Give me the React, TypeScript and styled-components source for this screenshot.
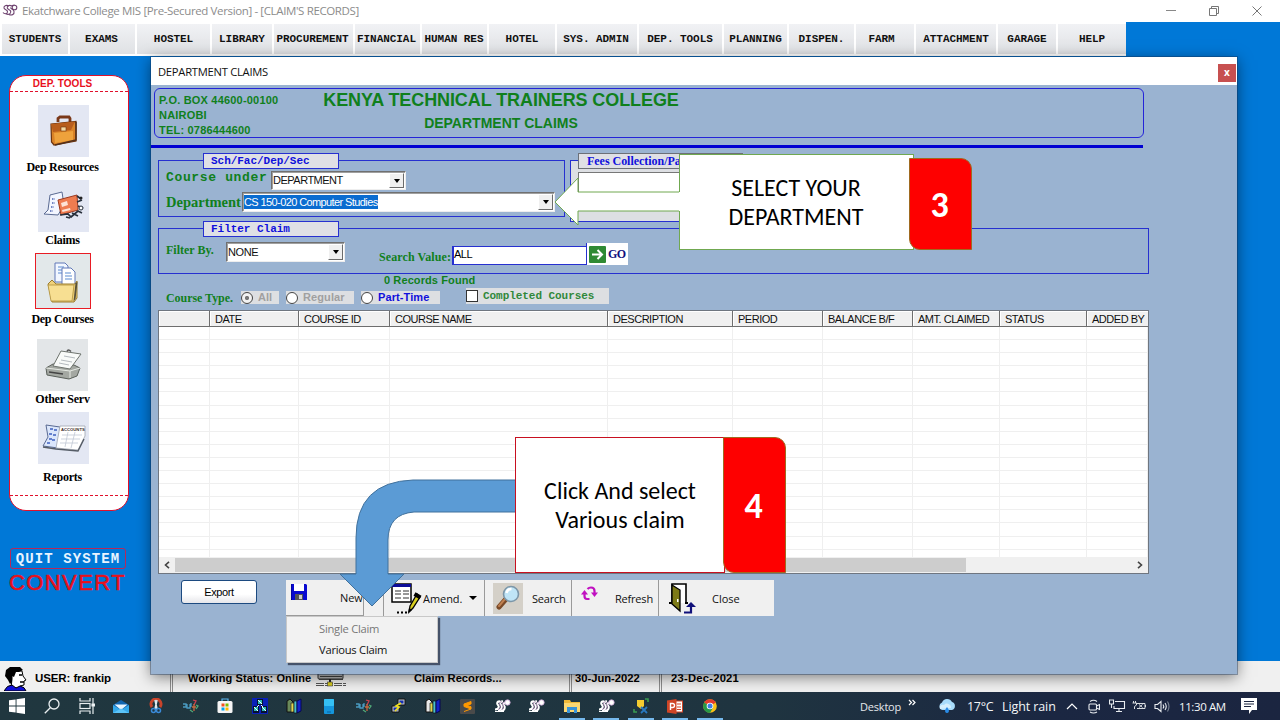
import React from "react";
import styled, { createGlobalStyle } from "styled-components";

const SANS = `"Liberation Sans", Arial, sans-serif`;
const SERIF = `"Liberation Serif", "Times New Roman", serif`;
const MONO = `"Liberation Mono", "Courier New", monospace`;
const UI = `"Open Sans", "Noto Sans", sans-serif`;
const CALLOUT = `Carlito, Lato, sans-serif`;

const Global = createGlobalStyle`
  * { box-sizing: border-box; }
  html, body { margin: 0; padding: 0; overflow: hidden; }
  svg { display: block; flex: none; }
`;

const Screen = styled.div`
  position: relative;
  width: 1280px;
  height: 720px;
  overflow: hidden;
  display: flex;
  flex-direction: column;
  background: #0078d7;
`;

const Text = styled.span<{ $font?: string; $size?: number; $color?: string; $bold?: boolean; $ls?: number; $w?: number }>`
  font-family: ${(p) => p.$font ?? SANS};
  font-size: ${(p) => p.$size ?? 11}px;
  font-weight: ${(p) => (p.$bold ? 700 : 400)};
  color: ${(p) => p.$color ?? "#111"};
  letter-spacing: ${(p) => p.$ls ?? 0}px;
  line-height: 15px;
  white-space: nowrap;
  flex: none;
  ${(p) => (p.$w ? `width: ${p.$w}px;` : "")}
`;

/* ---------- main window chrome ---------- */

const TitleBar = styled.header`
  height: 22px;
  flex: none;
  background: #fff;
  display: flex;
  align-items: center;
  padding: 0 17px 1px 2px;
  gap: 4px;
`;

const WindowControls = styled.div`
  margin-left: auto;
  display: flex;
  align-items: center;
  gap: 31px;
`;

const MenuBar = styled.nav`
  height: 34px;
  width: 1126px;
  flex: none;
  display: flex;
  background: #fff;
  padding: 2px 0 2px 2px;
  gap: 2px;
`;

const MenuItem = styled.div<{ $w: number; $shift?: number }>`
  width: ${(p) => p.$w}px;
  flex: none;
  display: flex;
  align-items: center;
  justify-content: center;
  padding-right: ${(p) => p.$shift ?? 0}px;
  background: linear-gradient(#f1f2f5, #dfe1e4);
  font: 700 11px/14px ${MONO};
  color: #111;
  letter-spacing: -0.05px;
  white-space: nowrap;
`;

const Desktop = styled.main`
  flex: 1;
  min-height: 0;
  display: flex;
  flex-direction: column;
  padding: 19px 0 0 9px;
`;

/* ---------- sidebar ---------- */

const Side = styled.aside`
  width: 120px;
  height: 436px;
  flex: none;
  border: 1px solid #e0102c;
  border-radius: 17px;
  background: #fff;
  display: flex;
  flex-direction: column;
  align-items: stretch;
`;

const SideTitle = styled.div`
  height: 16px;
  padding: 0 13px 0 0;
  text-align: center;
  font: 700 10px/15px ${SANS};
  letter-spacing: 0.05px;
  color: #e8101c;
  border-bottom: 1px dashed #e0102c;
`;

const SideFoot = styled.div`
  margin-top: auto;
  height: 15px;
  border-top: 1px dashed #e0102c;
`;

const SideItem = styled.div<{ $top: number; $gap: number; $shift?: number }>`
  margin-top: ${(p) => p.$top}px;
  display: flex;
  flex-direction: column;
  align-items: center;
  gap: ${(p) => p.$gap}px;
  padding-right: 13px;
  & > :first-child { margin-left: ${(p) => p.$shift ?? 2}px; }
`;

const Tile = styled.div<{ $bg?: string; $active?: boolean }>`
  width: ${(p) => (p.$active ? 56 : 51)}px;
  height: ${(p) => (p.$active ? 56 : 52)}px;
  background: ${(p) => p.$bg ?? "#e3e7f3"};
  border: ${(p) => (p.$active ? "1px solid #e81c24" : "none")};
  display: flex;
  align-items: center;
  justify-content: center;
`;

const SideLabel = styled.div`
  height: 14px;
  font: 700 12px/14px ${SERIF};
  letter-spacing: -0.25px;
  color: #000;
  white-space: nowrap;
`;

const Quit = styled.div`
  margin: 37px 0 0 1px;
  width: 116px;
  height: 21px;
  border: 1px solid #b8285a;
  border-radius: 3px;
  display: flex;
  align-items: center;
  justify-content: center;
  font: 700 14px/18px ${MONO};
  letter-spacing: 1.1px;
  color: #e8f4ff;
  white-space: nowrap;
`;

const Convert = styled.div`
  height: 27px;
  font: 400 22px/27px ${SANS};
  letter-spacing: 1.4px;
  color: #e8101c;
  -webkit-text-stroke: 0.6px #e8101c;
`;

/* ---------- department claims window ---------- */

const ClaimsWindow = styled.section`
  position: absolute;
  left: 151px;
  top: 57px;
  width: 1086px;
  height: 617px;
  z-index: 2;
  display: flex;
  flex-direction: column;
  background: #9ab3d1;
  box-shadow: 0 0 0 1px rgba(20, 50, 90, 0.4), 0 3px 14px rgba(0, 0, 0, 0.5);
`;

const ClaimsTitle = styled.div`
  height: 28px;
  flex: none;
  background: #fff;
  display: flex;
  align-items: center;
  justify-content: space-between;
  padding: 0 1px 0 7px;
`;

const CloseBox = styled.div`
  width: 18px;
  height: 18px;
  margin-top: 3px;
  background: #c75050;
  color: #fff;
  font: 700 10px/17px ${UI};
  text-align: center;
`;

const Banner = styled.div`
  margin: 3px 0 0 3px;
  width: 990px;
  height: 50px;
  flex: none;
  border: 1px solid #2424d8;
  border-radius: 6px;
  display: grid;
  grid-template-columns: 149px 394px;
`;

const Address = styled.div`
  padding: 4px 0 0 4px;
  font: 700 11px/15px ${SANS};
  letter-spacing: 0.2px;
  color: #10801c;
  white-space: nowrap;
`;

const BannerTitles = styled.div`
  display: flex;
  flex-direction: column;
  align-items: center;
  color: #10801c;
  font-family: ${SANS};
  font-weight: 700;
  white-space: nowrap;
`;

const College = styled.div`
  font-size: 18px;
  line-height: 23px;
  letter-spacing: -0.09px;
`;

const Subtitle = styled.div`
  font-size: 14px;
  line-height: 23px;
`;

const Rule = styled.div`
  margin-top: 7px;
  width: 992px;
  height: 3px;
  flex: none;
  background: #0000d2;
`;

const GroupRow = styled.div`
  display: flex;
  align-items: flex-start;
  gap: 5px;
  margin: 12px 0 0 7px;
  height: 68px;
  flex: none;
`;

const Group = styled.div<{ $w: number; $h: number; $bg?: string }>`
  width: ${(p) => p.$w}px;
  height: ${(p) => p.$h}px;
  flex: none;
  border: 1px solid #2630d0;
  background: ${(p) => p.$bg ?? "transparent"};
`;

const Legend = styled.div<{ $w: number; $left: number; $gray?: boolean }>`
  width: ${(p) => p.$w}px;
  height: 16px;
  margin: -8px 0 0 ${(p) => p.$left}px;
  padding-left: ${(p) => (p.$gray ? 8 : 7)}px;
  border: 1px solid ${(p) => (p.$gray ? "#6c7078" : "#2630d0")};
  background: #dfe0e5;
  color: #1010dc;
  font: ${(p) => (p.$gray ? `700 12px/14px ${SERIF}` : `700 11px/14px ${MONO}`)};
  letter-spacing: -0.03px;
  white-space: nowrap;
  overflow: hidden;
`;

const Field = styled.div<{ $top: number }>`
  display: flex;
  align-items: center;
  padding-left: 7px;
  margin-top: ${(p) => p.$top}px;
`;

const RaisedLabel = styled.div`
  padding-bottom: 6px;
  height: 19px;
  line-height: 13px;
  display: flex;
  align-items: center;
`;

const ComboBox = styled.div<{ $w: number; $h?: number }>`
  width: ${(p) => p.$w}px;
  height: ${(p) => p.$h ?? 19}px;
  flex: none;
  display: flex;
  align-items: center;
  justify-content: space-between;
  background: #fff;
  border: 1px solid;
  border-color: #707070 #eee #eee #707070;
  box-shadow: inset 1px 1px 0 #a0a0a0;
  padding: 1px 1px 1px 1px;
`;

const DropButton = styled.div`
  width: 15px;
  height: 100%;
  background: #f0f0f0;
  border: 1px solid;
  border-color: #fff #6c6c6c #6c6c6c #fff;
  display: flex;
  align-items: center;
  justify-content: center;
`;

const Caret = styled.i<{ $size?: number }>`
  width: 0;
  height: 0;
  border: ${(p) => p.$size ?? 3.5}px solid transparent;
  border-top: ${(p) => p.$size ?? 4}px solid #000;
  border-bottom: 0;
`;

const Selected = styled.span`
  background: #0a6cd0;
  color: #fff;
  font: 11px/14px ${SANS};
  letter-spacing: -0.6px;
  white-space: nowrap;
`;

const PlainBox = styled.div`
  margin: 3px 0 0 7px;
  width: 160px;
  height: 21px;
  background: #fff;
  border: 1px solid #777;
`;

const FilterRow = styled.div`
  display: flex;
  align-items: flex-start;
  padding-left: 7px;
`;

const Down = styled.div<{ $y: number; $x?: number }>`
  margin: ${(p) => p.$y}px 0 0 ${(p) => p.$x ?? 0}px;
  display: flex;
  flex: none;
`;

const SearchBox = styled.div`
  width: 134px;
  height: 19px;
  background: #fff;
  border: 1px solid #2630d0;
  border-width: 1px 0 1px 2px;
  font: 11px/14px ${SANS};
  letter-spacing: -0.5px;
`;

const GoButton = styled.div`
  width: 42px;
  height: 22px;
  border-left: 1px solid #2630d0;
  background: #fff;
  display: flex;
  align-items: center;
  gap: 2px;
  padding-left: 2px;
  font: 700 12px/15px ${SERIF};
  letter-spacing: -0.5px;
  color: #101080;
`;

const Found = styled.div`
  height: 12px;
  margin: 0 0 2px 233px;
  font: 700 11px/12px ${SANS};
  letter-spacing: 0.1px;
  color: #10801c;
`;

const TypeRow = styled.div`
  height: 16px;
  flex: none;
  display: flex;
  align-items: center;
  padding: 0 0 0 15px;
`;

const Option = styled.div<{ $w: number; $gap: number; $h?: number; $y?: number }>`
  width: ${(p) => p.$w}px;
  height: ${(p) => p.$h ?? 13}px;
  margin: ${(p) => p.$y ?? 2}px ${(p) => p.$gap}px 0 0;
  flex: none;
  background: #dddfe2;
  display: flex;
  align-items: center;
`;

const Radio = styled.i<{ $on?: boolean }>`
  width: 12px;
  height: 12px;
  flex: none;
  border: 1.5px solid #444;
  border-radius: 50%;
  background: ${(p) => (p.$on ? "radial-gradient(circle, #777 0 1.8px, #f2f2f2 2.4px)" : "#fff")};
  margin-right: 5px;
`;

const Check = styled.i`
  width: 12px;
  height: 12px;
  flex: none;
  border: 1px solid #333;
  background: #fff;
  margin-right: 5px;
`;

/* ---------- claims grid ---------- */

const Grid = styled.div`
  margin: 6px 0 0 7px;
  width: 991px;
  height: 264px;
  flex: none;
  border: 1px solid #6f7680;
  background: #fff;
  display: flex;
  flex-direction: column;
`;

const HeadRow = styled.div`
  display: flex;
  height: 16px;
  flex: none;
  background: #f0f0f0;
  border-bottom: 1px solid #6e6e6e;
`;

const HeadCell = styled.div<{ $w: number }>`
  width: ${(p) => p.$w}px;
  flex: none;
  padding-left: 5px;
  border-right: 1px solid #6e6e6e;
  box-shadow: inset 1px 1px 0 #fff;
  font: 11px/16px ${SANS};
  letter-spacing: -0.48px;
  color: #111;
  white-space: nowrap;
  overflow: hidden;
  &:last-child { border-right: 0; }
`;

const GridBody = styled.div`
  flex: 1;
  min-height: 0;
  overflow: hidden;
`;

const GridRow = styled.div`
  height: 13.1px;
  display: flex;
  border-bottom: 1px solid #efefef;
`;

const GridCell = styled.div<{ $w: number }>`
  width: ${(p) => p.$w}px;
  flex: none;
  border-right: 1px solid #efefef;
`;

const ScrollBar = styled.div`
  height: 16px;
  flex: none;
  background: #f0f0f0;
  display: flex;
  align-items: center;
  justify-content: space-between;
`;

const ScrollThumb = styled.div`
  width: 791px;
  height: 14px;
  margin-right: auto;
  background: #cdcdcd;
`;

const ScrollEnd = styled.div`
  width: 16px;
  display: flex;
  justify-content: center;
`;

/* ---------- bottom toolbar ---------- */

const Footer = styled.div`
  display: flex;
  align-items: flex-start;
  margin: 6px 0 0 30px;
`;

const ExportButton = styled.div`
  width: 76px;
  height: 24px;
  margin-right: 29px;
  border: 1px solid #1c4a80;
  border-radius: 3px;
  background: linear-gradient(#fff 60%, #e6e6ea);
  text-align: center;
  font: 11px/23px ${SANS};
  letter-spacing: -0.4px;
`;

const Toolbar = styled.div`
  position: relative;
  width: 488px;
  height: 36px;
  background: #f0f0f0;
  display: flex;
`;

const Tool = styled.div<{ $w: number; $pad: number; $gap: number; $raised?: boolean }>`
  width: ${(p) => p.$w}px;
  flex: none;
  display: flex;
  align-items: center;
  gap: ${(p) => p.$gap}px;
  padding-left: ${(p) => p.$pad}px;
  border-right: 1px solid ${(p) => (p.$w > 100 && p.$pad === 10 ? "transparent" : "#9a9a9a")};
  border-bottom: ${(p) => (p.$raised ? "1px solid #9a9a9a" : "none")};
`;

const SearchTile = styled.div`
  width: 30px;
  height: 31px;
  background: #d4d0c8;
  display: flex;
  align-items: center;
  justify-content: center;
`;

const DropMenu = styled.div`
  position: absolute;
  left: 0;
  top: 36px;
  width: 152px;
  height: 47px;
  background: #f2f2f2;
  border: 1px solid #c8c8c8;
  box-shadow: 2px 2px 1px rgba(40, 50, 70, 0.75);
  padding: 1px 0 0 32px;
  display: flex;
  flex-direction: column;
`;

const MenuEntry = styled.div<{ $off?: boolean }>`
  font: 11.2px/21px ${UI};
  letter-spacing: -0.25px;
  color: ${(p) => (p.$off ? "#777" : "#111")};
`;

/* ---------- status bar and taskbar ---------- */

const StatusBar = styled.footer`
  height: 31px;
  flex: none;
  background: #f0f0f0;
  display: flex;
`;

const StatusCell = styled.div<{ $w: number; $pad: number; $gap?: number; $line?: boolean }>`
  width: ${(p) => p.$w}px;
  flex: none;
  display: flex;
  align-items: center;
  gap: ${(p) => p.$gap ?? 0}px;
  padding: 4px 0 0 ${(p) => p.$pad}px;
  border-right: ${(p) => (p.$line ? "3px double #8c8c8c" : "0")};
`;

const TaskBar = styled.div`
  position: relative;
  z-index: 3;
  height: 28px;
  flex: none;
  display: flex;
  background: linear-gradient(90deg, #20373f, #1f3440 60%, #1b2742 82%, #1b2540);
`;

const TaskButton = styled.div<{ $open?: boolean }>`
  width: 34.65px;
  flex: none;
  display: flex;
  align-items: center;
  justify-content: center;
  background: ${(p) => (p.$open ? "linear-gradient(#76b9ed, #76b9ed) center bottom / 26px 2px no-repeat" : "none")};
`;

const Tray = styled.div`
  margin-left: auto;
  width: 420px;
  display: flex;
  align-items: center;
`;

const TrayIcon = styled.div<{ $w: number }>`
  width: ${(p) => p.$w}px;
  flex: none;
`;

/* ---------- callouts ---------- */

const Callout = styled.div<{ $x: number; $y: number }>`
  position: absolute;
  left: ${(p) => p.$x}px;
  top: ${(p) => p.$y}px;
  z-index: 4;
  display: flex;
  align-items: flex-end;
`;

const CalloutBody = styled.div<{ $w: number; $h: number; $line: string; $shift?: number }>`
  width: ${(p) => p.$w}px;
  height: ${(p) => p.$h}px;
  background: #fff;
  border: 1px solid ${(p) => p.$line};
  display: flex;
  flex-direction: column;
  align-items: center;
  justify-content: center;
  padding-right: ${(p) => p.$shift ?? 0}px;
`;

const CalloutLine = styled.div`
  font: 24px/29px ${CALLOUT};
  color: #000;
  white-space: nowrap;
`;

const CalloutNumber = styled.div<{ $h: number; $overlap: number }>`
  width: 63px;
  height: ${(p) => p.$h}px;
  margin-left: -${(p) => p.$overlap}px;
  background: #fe0000;
  border: 1px solid #a06a20;
  border-radius: 0 11px 0 11px;
  display: flex;
  align-items: center;
  justify-content: center;
  font: 700 36px/40px ${CALLOUT};
  color: #fff;
  padding: 2px 2px 0 0;
`;

const Pointer = styled.svg<{ $x: number; $y: number }>`
  position: absolute;
  left: ${(p) => p.$x}px;
  top: ${(p) => p.$y}px;
  z-index: 5;
`;

/* ---------- drawings ---------- */

const Briefcase = () => (
  <svg width="30" height="32" viewBox="0 0 30 32">
    <path d="M9 7V3.500l2-1.500h9l1 1.500V7" fill="none" stroke="#7a3818" strokeWidth="2.800" />
    <path d="M2 9L27 6.500V26L5 30 2.500 27z" fill="#d98227" stroke="#6b3410" strokeWidth="1.200" />
    <path d="M2 9L26 6.500 22 15 4 17z" fill="#b85d1c" />
    <path d="M5 18L24 16V25L6 28z" fill="#eea23c" />
    <rect x="12" y="12" width="5" height="4" fill="#f6d9a0" stroke="#6b3410" strokeWidth=".6" />
    <path d="M27 7v18L6 30" fill="none" stroke="#53301a" strokeWidth="1.500" />
  </svg>
);

const ClaimsIcon = () => (
  <svg width="44" height="30" viewBox="0 0 44 30">
    <path d="M8 4L20 1 22 14 16 24 2 23 6 19z" fill="#f3f6ff" stroke="#5a6a92" />
    <path d="M10 8h3M10 12h3M9 16h3M8 20h3" stroke="#4a62b0" strokeWidth="1.500" strokeDasharray="1.500 1" />
    <path d="M16 9L35 4 36 19 19 24z" fill="#ee7c50" stroke="#9c3a20" />
    <path d="M19 12l6-2 1 4-6 2zM20 19l8-2 .5 2-8 2z" fill="#fde4d6" />
    <path d="M35 5l4 3M35 11l5-2M36 15l5 2M18 24l8-1 3 3 7-6 4 2M24 26l4 1M30 22l6 3" fill="none" stroke="#28303c" strokeWidth="1.700" />
    <circle cx="39" cy="17" r="2" fill="#fff" stroke="#28303c" />
    <circle cx="39" cy="7" r="1.500" fill="#222" />
  </svg>
);

const FolderIcon = () => (
  <svg width="34" height="44" viewBox="0 0 34 44">
    <path d="M9 4h10l3 3v16H9z" fill="#f2f7ff" stroke="#6079b8" />
    <path d="M12 8h6M12 11h6M12 14h6" stroke="#5b8bd0" />
    <path d="M16 9h9l4 4v14H16z" fill="#fff" stroke="#6079b8" />
    <path d="M19 14h6M19 17h7M19 20h7" stroke="#5b8bd0" />
    <path d="M2 25l4-4 4 4h19l2-3v17l-3 4H6z" fill="#f0d27a" stroke="#9a7c30" />
    <path d="M2 26h26l-2 16H5z" fill="#f7df92" stroke="#b0903c" strokeWidth=".8" />
    <path d="M29.500 24l2-1-2 17-2 2.500z" fill="#57513a" />
  </svg>
);

const ScannerIcon = () => (
  <svg width="40" height="34" viewBox="0 0 40 34">
    <path d="M3 20L10 16 31 17 37 20 34 28 26 31 4 27z" fill="#a4a8a2" stroke="#5a605a" />
    <path d="M3 20L27 23 37 20M27 23v7" fill="none" stroke="#e6eae4" />
    <path d="M18 3L38 6 27 21 10 18z" fill="#f8faf8" stroke="#6e746e" />
    <path d="M21 8l11 2M18 12l11 2M16 15l10 2" stroke="#b4babe" />
    <path d="M24 3.500q1-3 4 0" fill="none" stroke="#555" strokeWidth="1.500" />
    <path d="M6 24l14 2" stroke="#444" strokeWidth="1.500" />
  </svg>
);

const ReportsIcon = () => (
  <svg width="47" height="32" viewBox="0 0 47 32">
    <path d="M6 3L20 5 18 26 3 24 8 15z" fill="#dbe6fb" stroke="#5a6a92" />
    <path d="M10 7h3M9 12h3M9 17h3M7 21h3M14 8h3M13 13h3M12 18h3" stroke="#3f60c0" strokeWidth="1.600" />
    <path d="M20 4L45 4 45 14 38 28 16 26z" fill="#fff" stroke="#a0a5ae" strokeWidth=".8" />
    <path d="M22 13h20M21 17h19M20 21h18M28 10l-3 15M35 10l-4 16" stroke="#c0c8d4" strokeWidth=".8" />
    <path d="M3 25l13 2 22 2 6-12" fill="none" stroke="#555c66" strokeWidth="1.400" />
    <text x="21" y="9" fontSize="4.200" fontFamily="Liberation Sans" fontWeight="700" fill="#3a2a2a">ACCOUNTS</text>
  </svg>
);

const SnakeLogo = () => (
  <svg width="16" height="13" viewBox="0 0 16 13" fill="none" stroke="#6f4470" strokeWidth="1.100">
    <path d="M7 2C4 .5 1.500 2 2 4s4 1.500 3.500 4-3.500 2-4.500.5" />
    <path d="M10 2C7 .5 4.800 2 5.300 4s4 1.500 3.500 4-3 3-5 1.500" />
    <path d="M12 7.500C12.500 10 10 12 7 10.500M8.500 3.500C9 5.500 12 5 12 7.500" />
    <circle cx="12.500" cy="3.500" r="2.300" />
    <path d="M10 2.500q0-1.500 2.500-1.500" />
  </svg>
);

const SnakeTask = () => (
  <svg width="17" height="14" viewBox="0 0 17 14" fill="none">
    <path d="M6 2.500C3 2 2.500 4.500 4 6s1 4.500-3 4.500M9 2.500C6 2 5.500 4.500 7 6s1 5-3 5.500M12 4C9.500 3.500 8.500 5 10 6.500s1 5-3 5" stroke="#fff" strokeWidth="2.100" />
    <path d="M7.500 2.500C5.500 3 5 4.500 6 6s.5 4-2 4.500M10.500 3C8.500 3 8 4.500 9 6s.5 4-1.500 4.500" stroke="#8a5a90" strokeWidth=".7" />
    <circle cx="13.500" cy="3.500" r="2.700" fill="#fff" stroke="#c8a0d0" strokeWidth=".8" />
    <path d="M1 12.500h9" stroke="#fff" />
  </svg>
);

const Floppy = () => (
  <svg width="16" height="16" viewBox="0 0 16 16">
    <path d="M0 0h15l1 1v15H1l-1-1z" fill="#0a0ad0" />
    <rect x="3" y="0" width="10" height="7" fill="#fff" />
    <rect x="4" y="10" width="8" height="6" fill="#555" />
    <rect x="8" y="11" width="3" height="4" fill="#ccc" />
    <path d="M0 0v15l1 1" stroke="#000070" fill="none" />
  </svg>
);

const AmendIcon = () => (
  <svg width="31" height="31" viewBox="0 0 31 31">
    <rect x="1" y="1" width="19" height="18" fill="#fff" stroke="#000" strokeWidth="1.500" />
    <rect x="1" y="1" width="19" height="3" fill="#0c0c9a" />
    <path d="M4 8h6M12 8h6M4 11h6M12 11h6M4 15h6M12 15h6" stroke="#777" strokeWidth="1.600" />
    <path d="M26 11l3 3-7 11-4 4 1-6z" fill="#d9cf20" stroke="#000" strokeWidth="1.300" />
    <path d="M23.500 11l6 3.500" stroke="#000" strokeWidth="4" />
    <path d="M17 30l1-5 3 2z" />
    <path d="M6 29.500h2M10 29.500h2M14 29.500h2" stroke="#000" strokeWidth="2" />
  </svg>
);

const Magnifier = () => (
  <svg width="24" height="26" viewBox="0 0 24 26">
    <path d="M10 14L3 22" stroke="#7a4a28" strokeWidth="5" strokeLinecap="round" />
    <path d="M9 14L3 21" stroke="#c08050" strokeWidth="2" strokeLinecap="round" />
    <circle cx="15" cy="9" r="7.500" fill="#bfe4f6" stroke="#7c96a8" strokeWidth="1.600" />
    <path d="M10.500 8a5 5 0 0 1 5-4" stroke="#fff" strokeWidth="2.500" fill="none" />
  </svg>
);

const RefreshIcon = () => (
  <svg width="17" height="15" viewBox="0 0 17 15" fill="none" stroke="#c010c0" strokeWidth="2.200">
    <path d="M8.500 13H6Q3.500 13 3.500 10V7" />
    <path d="M0 8.500L3.500 4l3.500 4.500z" fill="#c010c0" stroke="none" />
    <path d="M6.500 3Q8 1.500 10 1.500q3.500 0 3.500 3.500v2" />
    <path d="M10 6.500h7l-3.500 4.500z" fill="#c010c0" stroke="none" />
  </svg>
);

const Door = () => (
  <svg width="27" height="31" viewBox="0 0 27 31">
    <path d="M3 20V1h14v19" fill="#fff" stroke="#000" strokeWidth="1.600" />
    <path d="M0 20h4M16 20h3" stroke="#000" strokeWidth="2" />
    <path d="M3 2l8 5v21l-8-7z" fill="#7d7a16" stroke="#000" strokeWidth="1.300" />
    <rect x="8" y="16" width="1.500" height="3" fill="#fff" />
    <path d="M15 29.500h7v-8" fill="none" stroke="#10107a" strokeWidth="2.200" />
    <path d="M17 24l5-5 5 5z" fill="#10107a" />
  </svg>
);

const GoArrow = () => (
  <svg width="17" height="17" viewBox="0 0 17 17">
    <rect width="17" height="17" rx="1" fill="#2f8a34" />
    <path d="M3 8.500h10M8.500 4l4.500 4.500L8.500 13" fill="none" stroke="#fff" strokeWidth="2" />
  </svg>
);

const UserHead = () => (
  <svg width="23" height="24" viewBox="0 0 23 24">
    <path d="M8 4h10l1 5 3 4-2 1v4l-4 1v2H7l1-9z" fill="#fff" stroke="#000" />
    <path d="M2 3L6 0h10l3 3-4 2h-3l-2 5-2-1v6l-2 2-2-4-3-4z" fill="#000" />
    <path d="M15 8h3M16 15h4" stroke="#000" strokeWidth="1.500" />
    <path d="M0 24q3-6 8-6l4 3 4-2q5 1 6 5z" fill="#1010d8" stroke="#000" />
  </svg>
);

const NetMonitor = () => (
  <svg width="30" height="24" viewBox="0 0 30 24">
    <rect x="2" y="1" width="25" height="11" rx="1" fill="#b8b8b8" stroke="#333" />
    <path d="M4 9.500h22M3 12.500h24" stroke="#444" />
    <path d="M0 16.500h30M0 18.500h30" stroke="#555" strokeDasharray="8 1" />
    <path d="M14 12v4" stroke="#222" strokeWidth="2" />
    <rect x="11.500" y="15" width="5" height="4" fill="#d8cc20" stroke="#444" strokeWidth=".6" />
  </svg>
);

const WinLogo = () => (
  <svg width="16" height="16" viewBox="0 0 16 16" fill="#fff">
    <path d="M0 2.300L6.600 1.400V7.500H0zM7.500 1.200L16 0V7.500H7.500zM0 8.400H6.600V14.600L0 13.700zM7.500 8.400H16V16L7.500 14.800z" />
  </svg>
);
const TaskSearch = () => (
  <svg width="16" height="16" viewBox="0 0 16 16" fill="none" stroke="#e8eef0" strokeWidth="1.300">
    <circle cx="10" cy="6" r="5" /><path d="M6.500 9.500L.8 15.200" />
  </svg>
);
const TaskView = () => (
  <svg width="16" height="16" viewBox="0 0 16 16" fill="none" stroke="#e8eef0" strokeWidth="1.200">
    <path d="M1 0v3h10V0M1 16v-3h10v3" /><rect x="1" y="5.500" width="10" height="5" /><path d="M14 0v16" /><path d="M13 6h2.500v2H13z" fill="#fff" />
  </svg>
);
const Mail = () => (
  <svg width="16" height="15" viewBox="0 0 16 15">
    <path d="M0 6l8-5 8 5v8H0z" fill="#1266b0" /><path d="M1.500 5.500h13L8 11z" fill="#e8f6ff" /><path d="M0 6l8 5 8-5v8H0z" fill="#35a9ea" /><path d="M0 14l8-4.500 8 4.500z" fill="#5cc4f8" />
  </svg>
);
const Snip = () => (
  <svg width="14" height="16" viewBox="0 0 14 16" fill="none">
    <path d="M3 9a5 5 0 1 1 8 0" stroke="#c8432a" strokeWidth="3" /><path d="M6 2l2 9M8 2l-2 9" stroke="#dfe8ee" strokeWidth="1.600" /><circle cx="4.500" cy="12.500" r="2" stroke="#3a8ad8" strokeWidth="1.500" /><circle cx="9.500" cy="12.500" r="2" stroke="#3a8ad8" strokeWidth="1.500" />
  </svg>
);
const Drone = () => (
  <svg width="17" height="14" viewBox="0 0 17 14" fill="none" strokeWidth="1.300">
    <path d="M1 5h3v3H1M5 5v4h3V5M9 4v4" stroke="#4a9ac0" /><path d="M11 1l3 1-2 4" stroke="#d04050" /><path d="M10 8h4M12 5v7" stroke="#c86a40" /><path d="M14 6l2 1-2 3M8 11l3 2" stroke="#50a878" />
  </svg>
);
const Store = () => (
  <svg width="16" height="16" viewBox="0 0 16 16">
    <path d="M5 3V1h6v2" fill="none" stroke="#58b4f0" strokeWidth="1.200" /><rect x=".5" y="3" width="15" height="12" rx="1.500" fill="#f5f5f5" /><path d="M4.500 5.500h3v3h-3z" fill="#f25022" /><path d="M8.500 5.500h3v3h-3z" fill="#7fba00" /><path d="M4.500 9.500h3v3h-3z" fill="#00a4ef" /><path d="M8.500 9.500h3v3h-3z" fill="#ffb900" />
  </svg>
);
const BlueCubes = () => (
  <svg width="16" height="16" viewBox="0 0 16 16">
    <rect width="16" height="16" fill="#0a20b8" /><path d="M5 1h6v6H5zM1 8h6v7H1zM9 8h6v7H9z" fill="#061030" /><path d="M6 2h4v4H6zM2 9h4v4H2zM10 9h4v4h-4z" fill="#2cb8b0" /><path d="M6 2l4 4M2 9l4 4M10 9l4 4M7 7L5 9M9 7l2 2" stroke="#f0ffff" />
  </svg>
);
const Books = ({ c }: { c: string }) => (
  <svg width="17" height="16" viewBox="0 0 17 16">
    <path d="M1 3l3-2 3 3v10H1z" fill={c} stroke="#111" /><path d="M5 5h3v9H5z" fill="#e0d850" stroke="#222" strokeWidth=".7" /><path d="M8 3h3v12H8z" fill="#48c0c8" stroke="#111" strokeWidth=".7" /><path d="M11 3l4-2v12l-4 2z" fill="#1424c8" stroke="#060650" />
  </svg>
);
const Phone = () => (
  <svg width="10" height="15" viewBox="0 0 10 15">
    <rect width="10" height="15" rx="1" fill="#1596dc" /><rect width="10" height="7" rx="1" fill="#35c0f4" /><path d="M3 13h4" stroke="#0a60a0" />
  </svg>
);
const Putty = () => (
  <svg width="15" height="16" viewBox="0 0 15 16">
    <path d="M7 1h7v6H7zM1 8h7v6H1z" fill="#c8ccd0" stroke="#111" /><path d="M8.500 2.500h4v3h-4zM2.500 9.500h4v3h-4z" fill="#1830b0" /><path d="M10 5L5 8l3 1-4 4" stroke="#f0e020" strokeWidth="1.700" fill="none" />
  </svg>
);
const Sublime = () => (
  <svg width="15" height="15" viewBox="0 0 15 15">
    <rect width="15" height="15" rx="1" fill="#4a4a4a" /><path d="M11 2.500L4 5v2.500l7 2.500v-2.300L7 6.400l4-1.400zM4 12.500l7-2.500" fill="#ff9800" stroke="#ff9800" strokeWidth="1" />
  </svg>
);
const Explorer = () => (
  <svg width="16" height="14" viewBox="0 0 16 14">
    <path d="M0 1h6l1 2h9v10H0z" fill="#f0b93a" /><path d="M0 4h16v9H0z" fill="#fcd873" /><path d="M3 8h10v6h-3v-3H6v3H3z" fill="#3a94d8" />
  </svg>
);
const PinApp = () => (
  <svg width="16" height="16" viewBox="0 0 16 16" fill="none">
    <path d="M4 2h7v6l-3 3-4-3z" fill="#f4cc30" /><path d="M1 11v3h3M12 1h3v3" stroke="#3a9a50" strokeWidth="1.600" /><path d="M8 9l6 6M14 9l-6 6" stroke="#2878c0" strokeWidth="1.800" />
  </svg>
);
const PowerPoint = () => (
  <svg width="16" height="15" viewBox="0 0 16 15">
    <rect x="7" y="2" width="8.500" height="11" fill="#fff" stroke="#d04526" /><path d="M10 5h4M10 8h4M10 10.500h4" stroke="#d04526" strokeWidth="1.200" /><path d="M0 1.500L9.500 0v15L0 13.500z" fill="#d04526" />
    <path d="M3.500 11V4.500h2a2 2 0 0 1 0 4h-2" fill="none" stroke="#fff" strokeWidth="1.400" />
  </svg>
);
const Chrome = () => (
  <svg width="14" height="14" viewBox="0 0 14 14">
    <circle cx="7" cy="7" r="6.800" fill="#fbc116" /><path d="M7 7L1.100 3.600A6.800 6.800 0 0 1 12.900 3.600z" fill="#e33b2e" /><path d="M7 7L1.100 3.600A6.800 6.800 0 0 0 7 13.800L10 8.700z" fill="#279847" /><circle cx="7" cy="7" r="3.300" fill="#fff" /><circle cx="7" cy="7" r="2.500" fill="#3e7ee8" />
  </svg>
);
const Cloud = () => (
  <svg width="20" height="16" viewBox="0 0 20 16">
    <path d="M5 12a4 4 0 0 1 0-7.500A5.500 5.500 0 0 1 15 4a4.200 4.200 0 0 1 0 8z" fill="#a8dcfb" /><path d="M3 11a3 3 0 0 1 4-4 4 4 0 0 1 7 3z" fill="#d4effd" /><path d="M10 9q2.500 3 1.800 4.800a1.900 1.900 0 0 1-3.600 0Q7.500 12 10 9z" fill="#2a8be6" />
  </svg>
);

const MENU: [string, number, number?][] = [
  ["STUDENTS", 66, 0], ["EXAMS", 65, 2], ["HOSTEL", 73], ["LIBRARY", 60], ["PROCUREMENT", 79, 2], ["FINANCIAL", 65, 2],
  ["HUMAN RES", 65, 1], ["HOTEL", 66], ["SYS. ADMIN", 80, 2], ["DEP. TOOLS", 83, 1], ["PLANNING", 63], ["DISPEN.", 65],
  ["FARM", 58, 7], ["ATTACHMENT", 80], ["GARAGE", 58], ["HELP", 68],
];

const COLUMNS: [string, number][] = [
  ["", 51], ["DATE", 89], ["COURSE ID", 91], ["COURSE NAME", 218], ["DESCRIPTION", 125], ["PERIOD", 90],
  ["BALANCE B/F", 90], ["AMT. CLAIMED", 87], ["STATUS", 87], ["ADDED BY", 61],
];

const TASKS: [React.ReactNode, boolean?][] = [
  [<WinLogo />], [<TaskSearch />], [<TaskView />], [<Mail />], [<Snip />], [<Drone />], [<Store />], [<BlueCubes />],
  [<Books c="#6a8a5a" />], [<Phone />], [<Drone />], [<Putty />], [<Books c="#e8e8e8" />], [<Sublime />], [<SnakeTask />],
  [<SnakeTask />], [<Explorer />, true], [<SnakeTask />, true], [<PinApp />, true], [<PowerPoint />, true], [<Chrome />, true],
];

const Combo = ({ w, h, children }: { w: number; h?: number; children: React.ReactNode }) => (
  <ComboBox $w={w} $h={h}>
    {children}
    <DropButton><Caret /></DropButton>
  </ComboBox>
);

export default function App() {
  return (
    <Screen>
      <Global />
      <TitleBar>
        <SnakeLogo />
        <Text $font={UI} $size={11.5} $color="#8c8c8c" $ls={-0.37}>Ekatchware College MIS [Pre-Secured Version] - [CLAIM'S RECORDS]</Text>
        <WindowControls>
          <svg width="12" height="12" stroke="#888"><path d="M1 5.500h10" /></svg>
          <svg width="12" height="12" stroke="#777" fill="none"><path d="M1.500 3.500h7v7h-7zM3.500 3.500v-2h7v7h-2" /></svg>
          <svg width="12" height="12" stroke="#777"><path d="M1.500 1.500l9 9M10.500 1.500l-9 9" /></svg>
        </WindowControls>
      </TitleBar>
      <MenuBar>
        {MENU.map(([label, w, shift]) => <MenuItem key={label} $w={w} $shift={shift}>{label}</MenuItem>)}
      </MenuBar>

      <Desktop>
        <Side>
          <SideTitle>DEP. TOOLS</SideTitle>
          <SideItem $top={13} $gap={3}><Tile><Briefcase /></Tile><SideLabel>Dep Resources</SideLabel></SideItem>
          <SideItem $top={6} $gap={1}><Tile><ClaimsIcon /></Tile><SideLabel>Claims</SideLabel></SideItem>
          <SideItem $top={6} $gap={3} $shift={1}><Tile $active $bg="#e2e8ea"><FolderIcon /></Tile><SideLabel>Dep Courses</SideLabel></SideItem>
          <SideItem $top={13} $gap={1} $shift={0}><Tile $bg="#e3e6e8"><ScannerIcon /></Tile><SideLabel>Other Serv</SideLabel></SideItem>
          <SideItem $top={6} $gap={6}><Tile><ReportsIcon /></Tile><SideLabel>Reports</SideLabel></SideItem>
          <SideFoot />
        </Side>
        <Quit>QUIT SYSTEM</Quit>
        <Convert>CONVERT</Convert>
      </Desktop>

      <ClaimsWindow>
        <ClaimsTitle>
          <Text $font={UI} $size={11.2} $ls={-0.25}>DEPARTMENT CLAIMS</Text>
          <CloseBox>x</CloseBox>
        </ClaimsTitle>
        <Banner>
          <Address>
            <div>P.O. BOX 44600-00100</div>
            <div>NAIROBI</div>
            <div>TEL: 0786444600</div>
          </Address>
          <BannerTitles>
            <College>KENYA TECHNICAL TRAINERS COLLEGE</College>
            <Subtitle>DEPARTMENT CLAIMS</Subtitle>
          </BannerTitles>
        </Banner>
        <Rule />

        <GroupRow>
          <Group $w={407} $h={57}>
            <Legend $w={136} $left={44}>Sch/Fac/Dep/Sec</Legend>
            <Field $top={2}>
              <RaisedLabel>
                <Text $font={MONO} $size={13} $bold $color="#10801c" $ls={0.65} $w={105}>Course under</Text>
              </RaisedLabel>
              <Combo w={135}><Text $ls={-0.5}>DEPARTMENT</Text></Combo>
            </Field>
            <Field $top={2}>
              <Text $font={SERIF} $size={14.5} $bold $color="#10801c" $w={76}>Department</Text>
              <Combo w={313} h={20}><Selected>CS 150-020 Computer Studies</Selected></Combo>
            </Field>
          </Group>
          <Group $w={230} $h={62} $bg="#dddfe3">
            <Legend $w={165} $left={7} $gray>Fees Collection/Payment</Legend>
            <PlainBox />
          </Group>
        </GroupRow>

        <Down $y={0} $x={7}>
          <Group $w={991} $h={46}>
            <Legend $w={136} $left={44}>Filter Claim</Legend>
            <FilterRow>
              <Down $y={6}><Text $font={SERIF} $size={12} $bold $color="#10801c" $w={60}>Filter By.</Text></Down>
              <Down $y={5}><Combo w={119} h={20}><Text $ls={-0.4}>NONE</Text></Combo></Down>
              <Down $y={13} $x={34}><Text $font={SERIF} $size={12} $bold $color="#10801c" $ls={0.1} $w={73}>Search Value:</Text></Down>
              <Down $y={9}><SearchBox>ALL</SearchBox></Down>
              <Down $y={6}><GoButton><GoArrow />GO</GoButton></Down>
            </FilterRow>
          </Group>
        </Down>

        <Found>0 Records Found</Found>
        <TypeRow>
          <Down $y={4}><Text $font={SERIF} $size={12} $bold $color="#10801c" $ls={-0.05} $w={75}>Course Type.</Text></Down>
          <Option $w={38} $gap={7} $y={3}><Radio $on /><Text $bold $color="#a0a0a0">All</Text></Option>
          <Option $w={68} $gap={7} $y={3}><Radio /><Text $bold $color="#a0a0a0" $ls={0.1}>Regular</Text></Option>
          <Option $w={79} $gap={26} $y={3}><Radio /><Text $bold $color="#1010dc" $ls={0.1}>Part-Time</Text></Option>
          <Option $w={143} $gap={0} $h={16} $y={0}><Check /><Text $font={MONO} $bold $color="#30883a" $ls={-0.05}>Completed Courses</Text></Option>
        </TypeRow>

        <Grid>
          <HeadRow>{COLUMNS.map(([t, w]) => <HeadCell key={t} $w={w}>{t}</HeadCell>)}</HeadRow>
          <GridBody>
            {Array.from({ length: 18 }, (_, r) => (
              <GridRow key={r}>{COLUMNS.map(([t, w]) => <GridCell key={t} $w={w} />)}</GridRow>
            ))}
          </GridBody>
          <ScrollBar>
            <ScrollEnd><svg width="6" height="8" fill="none" stroke="#444" strokeWidth="1.600"><path d="M5 .8L1.500 4 5 7.200" /></svg></ScrollEnd>
            <ScrollThumb />
            <ScrollEnd><svg width="6" height="8" fill="none" stroke="#444" strokeWidth="1.600"><path d="M1 .8L4.500 4 1 7.200" /></svg></ScrollEnd>
          </ScrollBar>
        </Grid>

        <Footer>
          <ExportButton>Export</ExportButton>
          <Toolbar>
            <Tool $w={78} $pad={5} $gap={33} $raised><Down $y={-12}><Floppy /></Down><Text $font={UI} $ls={-0.1}>New</Text></Tool>
            <Tool $w={20} $pad={0} $gap={0}></Tool>
            <Tool $w={101} $pad={7} $gap={1}><AmendIcon /><Text $font={UI} $ls={-0.05} $w={45}>Amend.</Text><Caret $size={4} /></Tool>
            <Tool $w={87} $pad={8} $gap={9}><SearchTile><Magnifier /></SearchTile><Text $font={UI} $ls={-0.2}>Search</Text></Tool>
            <Tool $w={87} $pad={9} $gap={17}><Down $y={-9}><RefreshIcon /></Down><Text $font={UI} $ls={-0.2}>Refresh</Text></Tool>
            <Tool $w={115} $pad={10} $gap={16}><Door /><Text $font={UI}>Close</Text></Tool>
            <DropMenu>
              <MenuEntry $off>Single Claim</MenuEntry>
              <MenuEntry>Various Claim</MenuEntry>
            </DropMenu>
          </Toolbar>
        </Footer>
      </ClaimsWindow>

      <StatusBar>
        <StatusCell $w={173} $pad={4} $gap={8} $line><UserHead /><Text $bold $size={11.5} $color="#000" $ls={-0.1}>USER: frankip</Text></StatusCell>
        <StatusCell $w={174} $pad={15} $gap={5}><Text $bold $size={11} $color="#000" $ls={0.08}>Working Status: Online</Text><NetMonitor /></StatusCell>
        <StatusCell $w={225} $pad={67} $line><Text $bold $size={11.2} $color="#000">Claim Records...</Text></StatusCell>
        <StatusCell $w={90} $pad={3} $line><Text $bold $size={11.2} $color="#000">30-Jun-2022</Text></StatusCell>
        <StatusCell $w={90} $pad={9}><Text $bold $size={11.2} $color="#000" $ls={0.25}>23-Dec-2021</Text></StatusCell>
      </StatusBar>

      <TaskBar>
        {TASKS.map(([icon, open], i) => <TaskButton key={i} $open={open}>{icon}</TaskButton>)}
        <Tray>
          <Text $font={UI} $color="#e4e8ec" $w={48} $ls={-0.2}>Desktop</Text>
          <TrayIcon $w={29}><svg width="8" height="14" fill="none" stroke="#fff" strokeWidth="1.200"><path d="M1 1l2.500 2.500L1 6M4.500 1L7 3.500 4.500 6" /></svg></TrayIcon>
          <TrayIcon $w={30}><Cloud /></TrayIcon>
          <Text $font={UI} $size={12.5} $color="#f4f6f8" $w={35} $ls={-0.3}>17°C</Text>
          <Text $font={UI} $size={12.5} $color="#f4f6f8" $w={64} $ls={-0.1}>Light rain</Text>
          <TrayIcon $w={22}><svg width="12" height="7" fill="none" stroke="#fff" strokeWidth="1.200"><path d="M1 6l5-5 5 5" /></svg></TrayIcon>
          <TrayIcon $w={21}><svg width="12" height="15" fill="none" stroke="#e8ecf0" strokeWidth="1.100"><rect x="1" y="5" width="7.500" height="6" rx="1" /><path d="M8.500 7l3-1.500v5l-3-1.500M2 2.500q3.500-2.500 7 0M2 13q3.500 2 7 0" /></svg></TrayIcon>
          <TrayIcon $w={23}><svg width="17" height="14" fill="none" stroke="#e8ecf0" strokeWidth="1.100"><path d="M6 2.500h9.500v7H5V7M10 9.500V12M7 12.500h6M.5 1h4v4h-4zM2.500 5v4" /></svg></TrayIcon>
          <TrayIcon $w={22}><svg width="15" height="12" fill="none" stroke="#d8dce0" strokeWidth="1"><path d="M5 3.500h8v5H5M13.500 5v2M7 4.500l3.500 3M10.500 4.500L7 7.500M1.500 1v2M3.500 1v2M.5 3h4v2l-2 1.500V9" /></svg></TrayIcon>
          <TrayIcon $w={25}><svg width="17" height="13" fill="none" stroke="#e8ecf0" strokeWidth="1.100"><path d="M1 4.500h2.500L7 1.500v10L3.500 8.500H1zM9 4.500q1.500 2 0 4M11 3q2.500 3.500 0 7" /><path d="M13.500 1.500q3 5 0 10" stroke="#7a8494" /></svg></TrayIcon>
          <Text $font={UI} $size={11.5} $color="#f4f6f8" $w={62} $ls={-0.4}>11:30 AM</Text>
          <svg width="16" height="16"><path d="M0 0h16v12h-5l-3 4v-4H0z" fill="#fff" /><path d="M3 3.500h10M3 6h10M3 8.500h7" stroke="#1b2540" /></svg>
        </Tray>
      </TaskBar>

      <Callout $x={679} $y={154}>
        <CalloutBody $w={235} $h={96} $line="#70a850" $shift={1}>
          <CalloutLine>SELECT YOUR</CalloutLine>
          <CalloutLine>DEPARTMENT</CalloutLine>
        </CalloutBody>
        <CalloutNumber $h={92} $overlap={5}>3</CalloutNumber>
      </Callout>
      <Pointer $x={554} $y={177} width="127" height="51">
        <path d="M126 15H24V1L1 25 24 48V34H126z" fill="#fff" />
        <path d="M125 15H24V1L1 25 24 48V34H125" fill="none" stroke="#70a850" />
      </Pointer>

      <Pointer $x={338} $y={478} width="177" height="130">
        <path d="M179 2H75Q18 4 18 60V96H2L34 128 66 96H50V62Q50 36 76 34H179z" fill="#5b9bd5" stroke="#41719c" />
      </Pointer>
      <Callout $x={515} $y={437}>
        <CalloutBody $w={210} $h={136} $line="#c81020">
          <CalloutLine>Click And select</CalloutLine>
          <CalloutLine>Various claim</CalloutLine>
        </CalloutBody>
        <CalloutNumber $h={136} $overlap={2}>4</CalloutNumber>
      </Callout>
    </Screen>
  );
}
